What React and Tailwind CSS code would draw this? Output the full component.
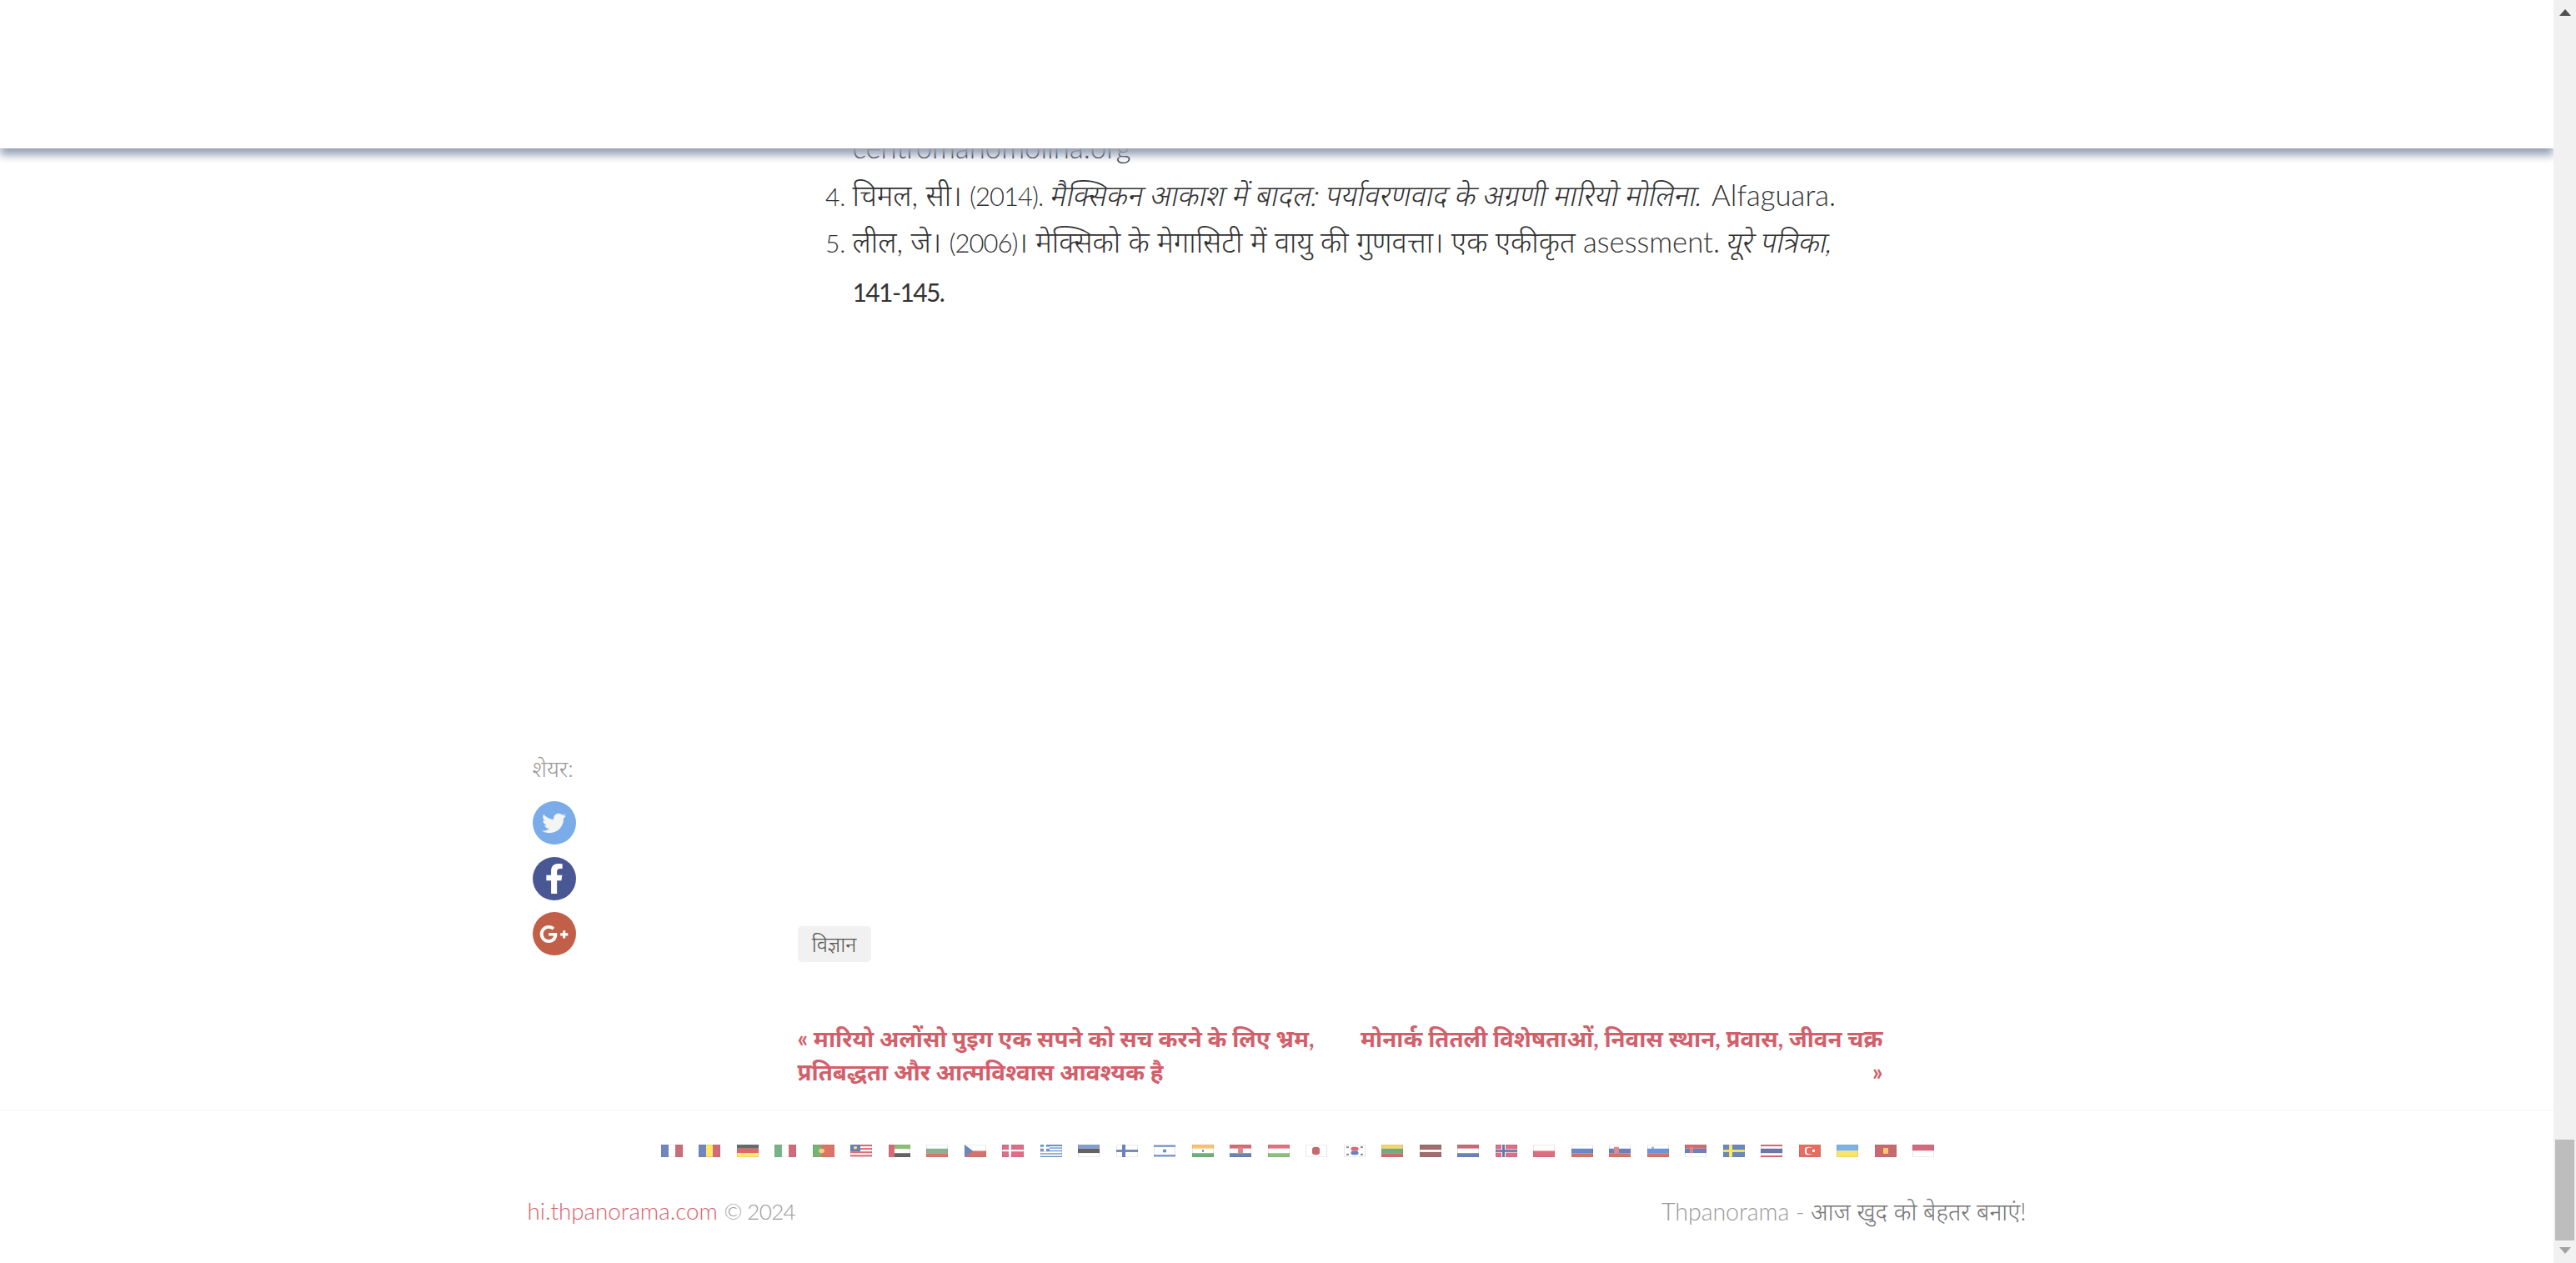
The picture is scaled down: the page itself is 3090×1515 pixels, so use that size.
import React from 'react'
import { FaTwitter, FaFacebookF, FaGooglePlusG } from 'react-icons/fa'

// each flag: list of [x, y, w, h, fill, rx] on a 26x22 grid, squashed to 26x15 when drawn
const W = '#ffffff'
const flags = [
  [[0, 0, 9, 22, '#24479c'], [9, 0, 8, 22, W], [17, 0, 9, 22, '#b01e32']],
  [[0, 0, 9, 22, '#24479c'], [9, 0, 8, 22, '#fcd91c'], [17, 0, 9, 22, '#b81e32']],
  [[0, 0, 26, 7, '#1a1a1a'], [0, 7, 26, 8, '#cc1a1a'], [0, 15, 26, 7, '#fcd91c']],
  [[0, 0, 9, 22, '#2f8a4a'], [9, 0, 8, 22, W], [17, 0, 9, 22, '#b81e32']],
  [[0, 0, 10, 22, '#2f8a2f'], [10, 0, 16, 22, '#cc2a1a'], [7, 7, 7, 8, '#e8b93c', 4]],
  [[0, 0, 26, 22, W], [0, 0, 26, 3, '#c8202c'], [0, 6, 26, 3, '#c8202c'], [0, 12, 26, 3, '#c8202c'], [0, 18, 26, 3, '#c8202c'], [0, 0, 12, 12, '#1f3a8a'], [4, 3, 4, 5, '#fcd91c', 2]],
  [[0, 0, 7, 22, '#c41e2e'], [7, 0, 19, 8, '#4f9e2e'], [7, 8, 19, 7, W], [7, 15, 19, 7, '#111111']],
  [[0, 0, 26, 7, W], [0, 7, 26, 8, '#4a8a5a'], [0, 15, 26, 7, '#c8301e']],
  { rects: [[0, 0, 26, 11, W], [0, 11, 26, 11, '#c0281e']], tri: '0,0 10,11 0,22', triFill: '#1c4a9c' },
  [[0, 0, 26, 22, '#c8224a'], [8, 0, 3, 22, W], [0, 9, 26, 3, W]],
  [[0, 0, 26, 22, W], [0, 0, 26, 3, '#2060b0'], [0, 5, 26, 2, '#2060b0'], [0, 10, 26, 2, '#2060b0'], [0, 15, 26, 2, '#2060b0'], [0, 20, 26, 2, '#2060b0'], [0, 0, 11, 12, '#2060b0'], [4, 0, 3, 12, W], [0, 4, 11, 3, W]],
  [[0, 0, 26, 7, '#4070b8'], [0, 7, 26, 8, '#111111'], [0, 15, 26, 7, W]],
  [[0, 0, 26, 22, W], [7, 0, 4, 22, '#1c3f94'], [0, 9, 26, 4, '#1c3f94']],
  [[0, 0, 26, 22, W], [0, 1, 26, 3, '#2050a8'], [0, 18, 26, 3, '#2050a8'], [11, 8, 4, 6, '#2050a8', 2]],
  [[0, 0, 26, 7, '#f5a623'], [0, 7, 26, 8, W], [0, 15, 26, 7, '#1e8a2e'], [12, 9, 2, 4, '#2050a8']],
  [[0, 0, 26, 7, '#c01e2a'], [0, 7, 26, 8, W], [0, 15, 26, 7, '#1c3f94'], [10, 5, 6, 10, '#c84a52']],
  [[0, 0, 26, 7, '#c82a3a'], [0, 7, 26, 8, W], [0, 15, 26, 7, '#4f9e3a']],
  [[0, 0, 26, 22, W], [8, 4, 9, 14, '#a81c24', 4]],
  [[0, 0, 26, 22, W], [8.5, 4, 9, 7, '#c81e30', 3], [8.5, 11, 9, 7, '#1c3f94', 3], [3, 3, 3, 3, '#555555'], [20, 3, 3, 3, '#555555'], [3, 16, 3, 3, '#555555'], [20, 16, 3, 3, '#555555']],
  [[0, 0, 26, 7, '#f0c020'], [0, 7, 26, 8, '#2a7a3a'], [0, 15, 26, 7, '#b81e1e']],
  [[0, 0, 26, 22, '#6e1e22'], [0, 9, 26, 4, W]],
  [[0, 0, 26, 7, '#ac1c2c'], [0, 7, 26, 8, W], [0, 15, 26, 7, '#1c3f94']],
  [[0, 0, 26, 22, '#c8224a'], [7, 0, 5, 22, W], [0, 8, 26, 6, W], [8, 0, 3, 22, '#1c2f7c'], [0, 9, 26, 4, '#1c2f7c']],
  [[0, 0, 26, 11, W], [0, 11, 26, 11, '#c8203c']],
  [[0, 0, 26, 7, W], [0, 7, 26, 8, '#1c4aa8'], [0, 15, 26, 7, '#c0281e']],
  [[0, 0, 26, 7, W], [0, 7, 26, 8, '#1c3f94'], [0, 15, 26, 7, '#c0281e'], [6, 4, 6, 12, '#c84a52']],
  [[0, 0, 26, 7, W], [0, 7, 26, 8, '#1c5ac8'], [0, 15, 26, 7, '#c0281e'], [5, 4, 3, 3, '#5080d0']],
  [[0, 0, 26, 7, '#b81e2a'], [0, 7, 26, 8, '#1c3f94'], [0, 15, 26, 7, W], [6, 4, 4, 11, '#c84a42']],
  [[0, 0, 26, 22, '#1c4a94'], [7, 0, 4, 22, '#fcd91c'], [0, 9, 26, 4, '#fcd91c']],
  [[0, 0, 26, 22, '#c0202c'], [0, 3, 26, 16, W], [0, 7, 26, 8, '#1c2f7c']],
  [[0, 0, 26, 22, '#d8200e'], [7, 4, 9, 14, W, 4], [9, 5, 8, 12, '#d8200e', 4], [16, 9, 3, 4, W]],
  [[0, 0, 26, 11, '#3a8ad8'], [0, 11, 26, 11, '#f8d81c']],
  [[0, 0, 26, 22, '#a81e24'], [10, 6, 6, 10, '#f0b020']],
  [[0, 0, 26, 11, '#b81e3a'], [0, 11, 26, 11, W]],
]

function Flag({ flag }) {
  const rects = flag.rects || flag
  return (
    <svg width="26" height="15" viewBox="0 0 26 22" preserveAspectRatio="none" className="block opacity-65 blur-[0.4px]">
      {rects.map((r, i) => (
        <rect key={i} x={r[0]} y={r[1]} width={r[2]} height={r[3]} rx={r[5] || 0} fill={r[4]} />
      ))}
      {flag.tri && <polygon points={flag.tri} fill={flag.triFill} />}
      <rect x="0.5" y="0.5" width="25" height="21" fill="none" stroke="#000" strokeOpacity="0.15" />
    </svg>
  )
}

function ShareIcon({ bg, children }) {
  return (
    <a className={`flex h-[52px] w-[52px] items-center justify-center rounded-full text-[#f3f4f4] ${bg}`}>
      {children}
    </a>
  )
}

export default function App() {
  return (
    <div className="relative flex h-[1515px] w-full overflow-hidden bg-white font-['Lato','Noto_Sans',sans-serif] font-light text-[#333]">
      <div className="relative flex h-full flex-1 flex-col">
        {/* fixed header laid over the scrolled page */}
        <div className="absolute left-0 right-0 top-0 z-10 h-[178px] bg-white shadow-[0_8px_10px_#95a1b5]"></div>

        <div className="mx-auto flex h-[1331px] w-[1798px]">
          <div className="w-[324px] pl-[6px] pt-[903px]">
            <div className="text-[27px] leading-[38px] text-[#999]">शेयर:</div>
            <div className="mt-[20px] flex flex-col gap-[14.5px]">
              <ShareIcon bg="bg-[#79ace9]"><FaTwitter size={29} /></ShareIcon>
              <ShareIcon bg="bg-[#495794]"><FaFacebookF size={36} className="mt-[1px] text-white" /></ShareIcon>
              <ShareIcon bg="bg-[#c25f48]"><FaGooglePlusG size={35} className="text-white" /></ShareIcon>
            </div>
          </div>

          <div className="flex w-[1304px] flex-col pt-[148px]">
            <ol className="list-decimal pl-[66px] text-[34.7px] leading-[57px] marker:text-[30px]">
              <li value={3} className="list-none">centromanomolina.org</li>
              <li value={4}>चिमल, सी। <span className="text-[31px] tracking-[-1px]">(2014).</span> <em className="inline-block -skew-x-12 italic">मैक्सिकन आकाश में बादल: पर्यावरणवाद के अग्रणी मारियो मोलिना.</em> Alfaguara.</li>
              <li value={5} className="-mt-[3px]">लील, जे। <span className="text-[31px] tracking-[-1px]">(2006)</span>। मेक्सिको के मेगासिटी में वायु की गुणवत्ता। एक एकीकृत asessment. <em className="inline-block -skew-x-12 italic">यूरे पत्रिका,</em> <span className="whitespace-nowrap text-[30px] font-normal tracking-[-1.6px]">141-145.</span></li>
            </ol>

            <div className="mt-auto">
              <a className="inline-flex h-[43px] w-[88px] items-center justify-center rounded-[5px] bg-[#f1f1f1] text-[25px] text-[#555]">विज्ञान</a>
              <div className="mt-[72px] flex pb-[25px] text-[27.7px] font-bold leading-[40px] text-[#d2606a]">
                <a className="w-1/2">« मारियो अलोंसो पुइग एक सपने को सच करने के लिए भ्रम,<br />प्रतिबद्धता और आत्मविश्वास आवश्यक है</a>
                <a className="w-1/2 pr-[2px] text-right">मोनार्क तितली विशेषताओं, निवास स्थान, प्रवास, जीवन चक्र<br />»</a>
              </div>
            </div>
          </div>
        </div>

        <footer className="flex-1 border-t border-[#f3f3f3]">
          <div className="mt-[41px] flex justify-center gap-[19.5px] pl-[50px]">
            {flags.map((flag, i) => (
              <Flag key={i} flag={flag} />
            ))}
          </div>
          <div className="mx-auto mt-[45px] flex w-[1798px] items-center justify-between text-[28.5px] leading-[40px] text-[#999]">
            <div className="text-[27.8px]"><a className="text-[#d9606a]">hi.thpanorama.com</a> <span className="text-[26px] tracking-[-0.6px]">© 2024</span></div>
            <div>Thpanorama - <span className="text-[#777]">आज खुद को बेहतर बनाएं!</span></div>
          </div>
        </footer>
      </div>

      {/* page scrollbar */}
      <div className="relative z-20 flex h-full w-[27px] flex-col items-center bg-[#f1f1f1]">
        <svg width="14" height="8" viewBox="0 0 14 8" className="mt-[11px] shrink-0"><path d="M7 0l7 8H0z" fill="#505050" /></svg>
        <div className="mt-auto h-[121px] w-[23px] bg-[#bdbdbd]"></div>
        <svg width="14" height="8" viewBox="0 0 14 8" className="mb-[11px] mt-[8px] shrink-0"><path d="M0 0h14L7 8z" fill="#a3a3a3" /></svg>
      </div>
    </div>
  )
}
